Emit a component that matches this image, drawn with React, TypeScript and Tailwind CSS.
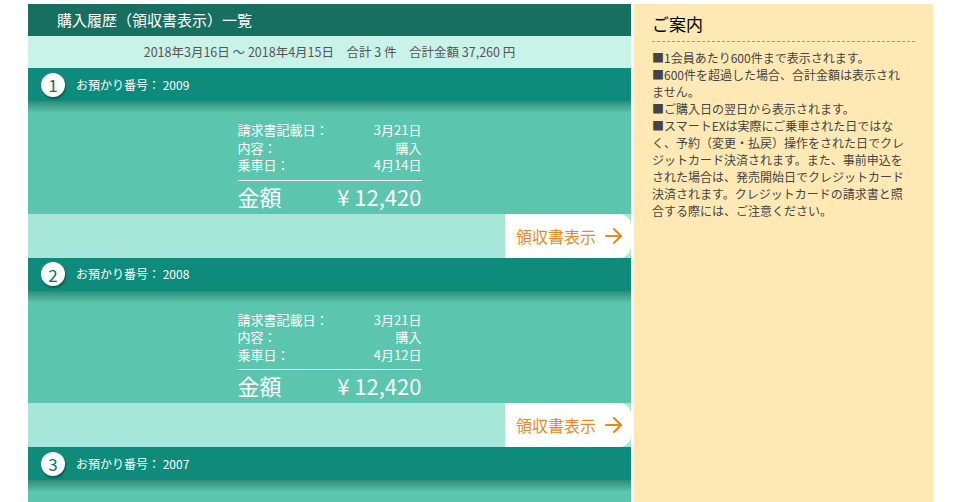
const font = { fontFamily: '"Noto Sans CJK JP", "Noto Sans", sans-serif' }

type Item = {
  no: number
  id: string
  billed: string
  kind: string
  ride: string
  amount: string
}

const items: Item[] = [
  { no: 1, id: '2009', billed: '3月21日', kind: '購入', ride: '4月14日', amount: '¥ 12,420' },
  { no: 2, id: '2008', billed: '3月21日', kind: '購入', ride: '4月12日', amount: '¥ 12,420' },
  { no: 3, id: '2007', billed: '3月21日', kind: '購入', ride: '4月10日', amount: '¥ 12,420' },
]

function Arrow() {
  return (
    <svg width="20" height="18" viewBox="0 0 20 18" fill="none" stroke="#e88a1c" strokeWidth="2.2" strokeLinecap="round" strokeLinejoin="round">
      <path d="M2 9h15" />
      <path d="M10 2l7 7-7 7" />
    </svg>
  )
}

function Receipt({ item }: { item: Item }) {
  return (
    <div>
      <div className="flex h-[33px] items-center bg-[#0f8b7b] pl-[13px]">
        <div className="flex h-[24px] w-[24px] items-center justify-center rounded-full bg-white text-[17px] leading-none text-[#11705f] shadow-[1px_2px_2px_rgba(0,0,0,0.35)]">
          {item.no}
        </div>
        <span className="ml-[11px] text-[12px] text-white">お預かり番号： {item.id}</span>
      </div>
      <div className="bg-[#5bc6ad]">
        <div className="h-[12px] bg-gradient-to-b from-[#2e8c79] to-[#5bc6ad]" />
        <div className="flex justify-center pb-[3px] pt-[8px]">
          <div className="w-[184px] text-white">
            <div className="flex justify-between text-[13px] leading-[17.5px]">
              <span>請求書記載日：</span>
              <span>{item.billed}</span>
            </div>
            <div className="flex justify-between text-[13px] leading-[17.5px]">
              <span>内容：</span>
              <span>{item.kind}</span>
            </div>
            <div className="flex justify-between text-[13px] leading-[17.5px]">
              <span>乗車日：</span>
              <span>{item.ride}</span>
            </div>
            <div className="mt-[6px] border-t border-white pt-[1px]">
              <div className="flex justify-between text-[22px] leading-[29px]">
                <span>金額</span>
                <span>{item.amount}</span>
              </div>
            </div>
          </div>
        </div>
      </div>
      <div className="flex h-[44px] justify-end bg-[#a7e7d9]">
        <button className="flex w-[126px] items-center gap-[8px] rounded-r-[12px] bg-white pl-[11px] text-[16px] text-[#e88a1c]">
          領収書表示
          <Arrow />
        </button>
      </div>
    </div>
  )
}

export default function App() {
  return (
    <div style={font} className="h-[502px] overflow-hidden bg-white">
      <div className="flex gap-[3px] pl-[28px] pt-[4px]">
        <div className="w-[603px] shrink-0">
          <div className="flex h-[32px] items-center bg-[#176f5f] pl-[29px] text-[15px] text-white">
            購入履歴（領収書表示）一覧
          </div>
          <div className="flex h-[32px] items-center justify-center bg-[#c9f3e9] text-[12.5px] text-[#555]">
            2018年3月16日 ～ 2018年4月15日　合計 3 件　合計金額 37,260 円
          </div>
          {items.map((it) => (
            <Receipt key={it.no} item={it} />
          ))}
        </div>
        <div className="w-[299px] shrink-0 bg-[#fee9b5] px-[18px] pt-[8px]">
          <h2 className="text-[17px] leading-[24px] text-black">ご案内</h2>
          <div className="mt-[5px] border-t border-dashed border-[#999]" />
          <div className="mt-[7px] w-[254px] text-[12px] leading-[17px] text-[#444]">
            <p>■1会員あたり600件まで表示されます。</p>
            <p>■600件を超過した場合、合計金額は表示されません。</p>
            <p>■ご購入日の翌日から表示されます。</p>
            <p>■スマートEXは実際にご乗車された日ではなく、予約（変更・払戻）操作をされた日でクレジットカード決済されます。また、事前申込をされた場合は、発売開始日でクレジットカード決済されます。クレジットカードの請求書と照合する際には、ご注意ください。</p>
          </div>
        </div>
      </div>
    </div>
  )
}
